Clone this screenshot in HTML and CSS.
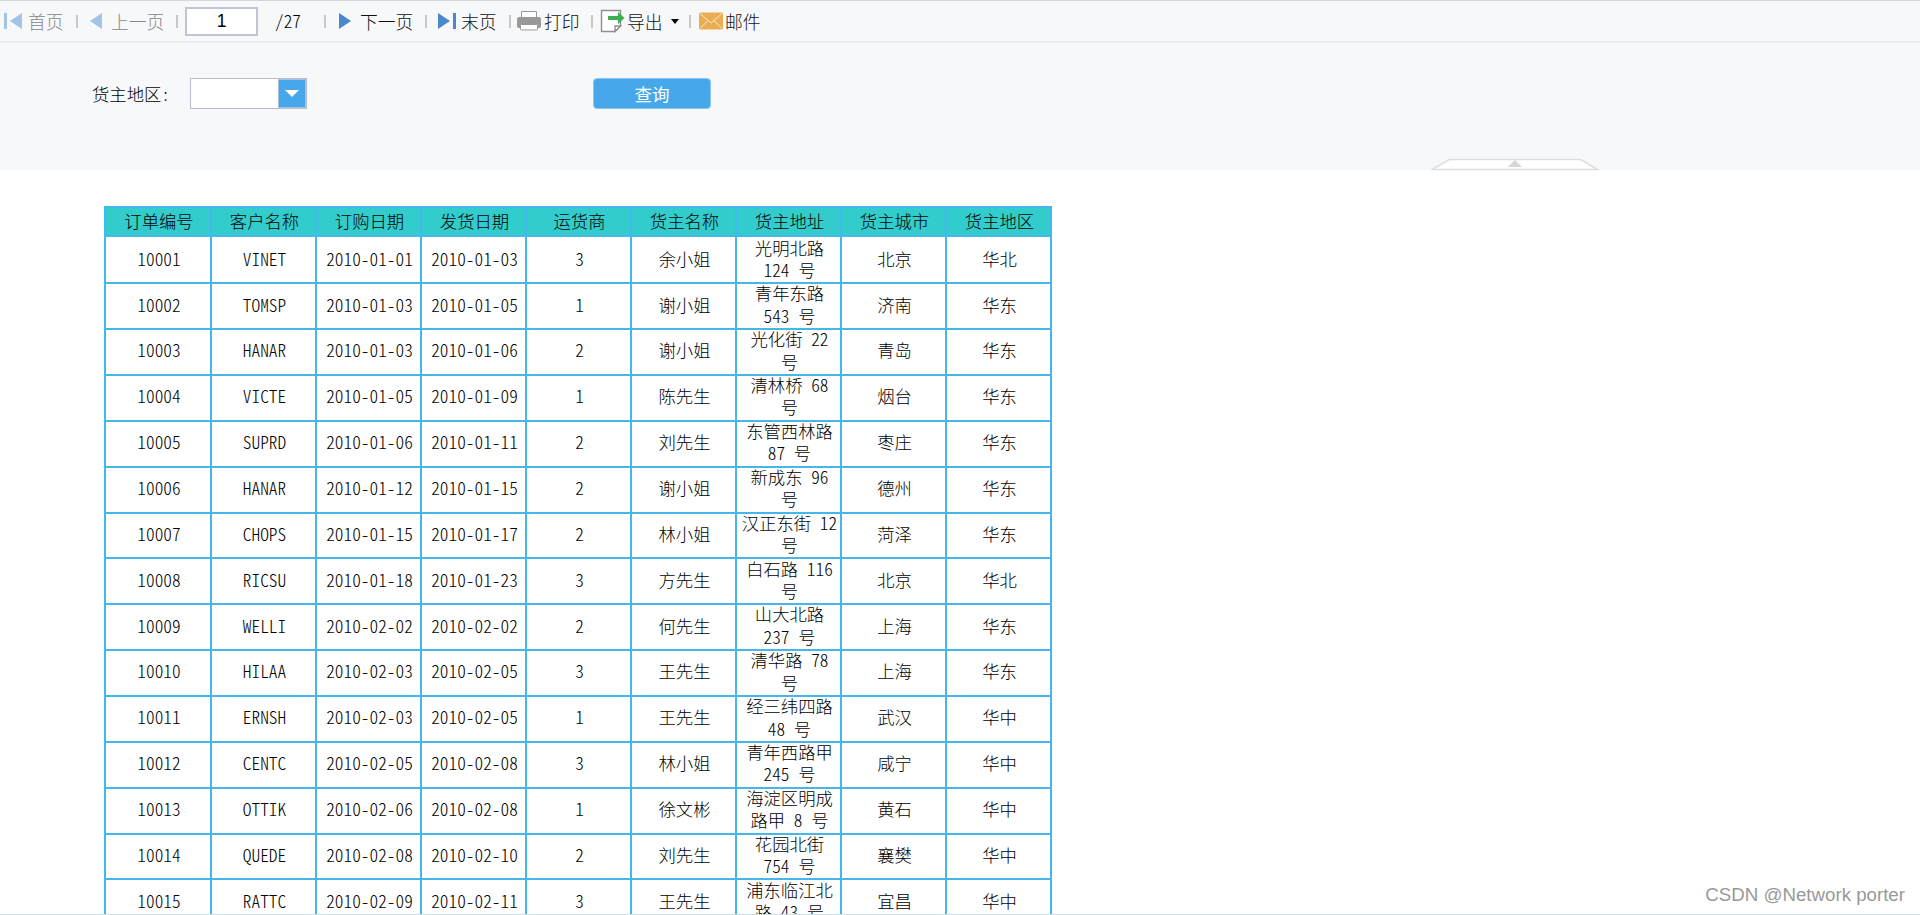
FILE: index.html
```
<!DOCTYPE html>
<html lang="zh-CN">
<head>
    <meta charset="utf-8">
    <title>订单报表</title>
    <link rel="stylesheet" href="styles.css">
</head>
<body>
<div class="toolbar">
    <div class="tool first disabled">
        <svg width="20" height="18" viewBox="0 0 20 18"><path d="M0 1h3v16H0zM18 1v16L6 9z" fill="#a3c3e5"/></svg>
        <span>首页</span>
    </div>
    <i class="sep"></i>
    <div class="tool prev disabled">
        <svg width="13" height="18" viewBox="0 0 13 18"><path d="M12 1v16L0 9z" fill="#a3c3e5"/></svg>
        <span>上一页</span>
    </div>
    <i class="sep"></i>
    <input class="page" type="text" value="1">
    <span class="total">/27</span>
    <i class="sep"></i>
    <div class="tool next">
        <svg width="13" height="18" viewBox="0 0 13 18"><path d="M0 1v16L12 9z" fill="#4a88cc"/></svg>
        <span>下一页</span>
    </div>
    <i class="sep"></i>
    <div class="tool last">
        <svg width="20" height="18" viewBox="0 0 20 18"><path d="M1 1v16L13 9zM16 1h3v16h-3z" fill="#4a88cc"/></svg>
        <span>末页</span>
    </div>
    <i class="sep"></i>
    <div class="tool print">
        <svg width="24" height="22" viewBox="0 0 24 22">
            <path d="M4.5 8V1.5h15V8" fill="#fff" stroke="#999"/>
            <rect x="0" y="7" width="24" height="11" rx="2" fill="#999"/>
            <rect x="3.5" y="14.5" width="17" height="5.5" rx="1" fill="#fff" stroke="#999"/>
        </svg>
        <span>打印</span>
    </div>
    <i class="sep"></i>
    <div class="tool export">
        <svg width="26" height="24" viewBox="0 0 26 24">
            <path d="M1.5 1.5h19V17L15 22.5H1.5z" fill="#fff" stroke="#8e8e8e" stroke-width="1.4"/>
            <path d="M20.5 17H15v5.5z" fill="#fff" stroke="#8e8e8e" stroke-width="1.4"/>
            <path d="M8 7h10V3l6.5 6L18 15v-4H8z" fill="#3fae52"/>
        </svg>
        <span>导出</span>
        <svg class="caret" width="8" height="5" viewBox="0 0 8 5"><path d="M0 0h8L4 5z" fill="#000"/></svg>
    </div>
    <i class="sep"></i>
    <div class="tool mail">
        <svg width="24" height="18" viewBox="0 0 24 18">
            <rect width="24" height="17" y=".5" rx="1.5" fill="#ebad52"/>
            <path d="M1 1.5l11 9.500 11-9.500M1 16.500l8-8M23 16.500l-8-8" fill="none" stroke="#fbe8cb"/>
        </svg>
        <span>邮件</span>
    </div>
</div>

<div class="params">
    <label for="region">货主地区:</label>
    <div class="combo">
        <input id="region" type="text">
        <div class="trigger">
            <svg width="14" height="7" viewBox="0 0 14 7"><path d="M0 0h14L7 7z" fill="#fff"/></svg>
        </div>
    </div>
    <button class="query">查询</button>
    <svg class="collapse" width="168" height="13" viewBox="0 0 168 13">
        <path d="M1.5 11.5L18 1.5h132l16.500 10z" fill="#fff" stroke="#ddd" stroke-width="1.5"/>
        <path d="M77 9l7-7 7 7z" fill="#d6d6d6"/>
    </svg>
</div>

<div class="report">
    <div class="row head">
        <div>订单编号</div><div>客户名称</div><div>订购日期</div><div>发货日期</div><div>运货商</div><div>货主名称</div><div>货主地址</div><div>货主城市</div><div>货主地区</div>
    </div>
    <div class="row"><div>10001</div><div>VINET</div><div>2010-01-01</div><div>2010-01-03</div><div>3</div><div>余小姐</div><div>光明北路<br>124 号</div><div>北京</div><div>华北</div></div>
    <div class="row"><div>10002</div><div>TOMSP</div><div>2010-01-03</div><div>2010-01-05</div><div>1</div><div>谢小姐</div><div>青年东路<br>543 号</div><div>济南</div><div>华东</div></div>
    <div class="row"><div>10003</div><div>HANAR</div><div>2010-01-03</div><div>2010-01-06</div><div>2</div><div>谢小姐</div><div>光化街 22<br>号</div><div>青岛</div><div>华东</div></div>
    <div class="row"><div>10004</div><div>VICTE</div><div>2010-01-05</div><div>2010-01-09</div><div>1</div><div>陈先生</div><div>清林桥 68<br>号</div><div>烟台</div><div>华东</div></div>
    <div class="row"><div>10005</div><div>SUPRD</div><div>2010-01-06</div><div>2010-01-11</div><div>2</div><div>刘先生</div><div>东管西林路<br>87 号</div><div>枣庄</div><div>华东</div></div>
    <div class="row"><div>10006</div><div>HANAR</div><div>2010-01-12</div><div>2010-01-15</div><div>2</div><div>谢小姐</div><div>新成东 96<br>号</div><div>德州</div><div>华东</div></div>
    <div class="row"><div>10007</div><div>CHOPS</div><div>2010-01-15</div><div>2010-01-17</div><div>2</div><div>林小姐</div><div>汉正东街 12<br>号</div><div>菏泽</div><div>华东</div></div>
    <div class="row"><div>10008</div><div>RICSU</div><div>2010-01-18</div><div>2010-01-23</div><div>3</div><div>方先生</div><div>白石路 116<br>号</div><div>北京</div><div>华北</div></div>
    <div class="row"><div>10009</div><div>WELLI</div><div>2010-02-02</div><div>2010-02-02</div><div>2</div><div>何先生</div><div>山大北路<br>237 号</div><div>上海</div><div>华东</div></div>
    <div class="row"><div>10010</div><div>HILAA</div><div>2010-02-03</div><div>2010-02-05</div><div>3</div><div>王先生</div><div>清华路 78<br>号</div><div>上海</div><div>华东</div></div>
    <div class="row"><div>10011</div><div>ERNSH</div><div>2010-02-03</div><div>2010-02-05</div><div>1</div><div>王先生</div><div>经三纬四路<br>48 号</div><div>武汉</div><div>华中</div></div>
    <div class="row"><div>10012</div><div>CENTC</div><div>2010-02-05</div><div>2010-02-08</div><div>3</div><div>林小姐</div><div>青年西路甲<br>245 号</div><div>咸宁</div><div>华中</div></div>
    <div class="row"><div>10013</div><div>OTTIK</div><div>2010-02-06</div><div>2010-02-08</div><div>1</div><div>徐文彬</div><div>海淀区明成<br>路甲 8 号</div><div>黄石</div><div>华中</div></div>
    <div class="row"><div>10014</div><div>QUEDE</div><div>2010-02-08</div><div>2010-02-10</div><div>2</div><div>刘先生</div><div>花园北街<br>754 号</div><div>襄樊</div><div>华中</div></div>
    <div class="row"><div>10015</div><div>RATTC</div><div>2010-02-09</div><div>2010-02-11</div><div>3</div><div>王先生</div><div>浦东临江北<br>路 43 号</div><div>宜昌</div><div>华中</div></div>
</div>
<div class="watermark">CSDN @Network porter</div>
</body>
</html>
```
FILE: styles.css
```
* {box-sizing:border-box;}
body {margin:0; height:915px; overflow:hidden; position:relative; background:#fff; border-bottom:1px solid #c9dfe2; font-family:"Noto Sans CJK SC",sans-serif; font-size:17.33px; font-weight:300; color:#000; display:flex; flex-direction:column;}
svg {display:block; flex:none;}

/* toolbar */
.toolbar {display:flex; align-items:center; flex:none; height:43px; padding-left:4px; background:#f7f8fa; border-top:1px solid #d5d7da; border-bottom:2px solid #ebecee; font-size:17.8px; line-height:26px; color:#111;}
.tool {display:flex; align-items:center; flex:none; white-space:nowrap;}
.disabled {color:#888;}
.sep {width:2px; height:13px; background:#c8c8cb; flex:none;}
.first {width:72px; gap:4px;}
.prev {width:98px; padding-left:12px; gap:8px;}
.page {width:73px; height:29px; margin-left:7px; padding:0; border:2px solid #c3c3d5; background:#fff; font:17.5px "Liberation Sans",sans-serif; text-align:center; flex:none;}
.total {width:66px; padding-left:17px; font-size:17.33px; font-feature-settings:"hwid"; color:#000; flex:none;}
.next {width:99px; padding-left:13px; gap:8px;}
.last {width:82px; padding-left:10px; gap:4px;}
.print {width:80px; padding-left:6px; gap:3px;}
.export {width:96px; padding-left:7px; gap:1px;}
.caret {margin-left:7px;}
.mail {padding-left:8px; gap:2px;}

/* query parameters */
.params {display:flex; align-items:flex-start; flex:none; position:relative; height:127px; padding:35px 0 0 92px; background:#f7f8fa;}
.params label {width:98px; line-height:31px; font-feature-settings:"hwid";}
.combo {display:flex; width:117px; height:31px; border:1px solid #b9bccf;}
.combo input {width:87px; border:0; background:#fff;}
.trigger {display:flex; align-items:center; justify-content:center; flex:1; background:#46a7eb; border:1px solid #a5c3da;}
.query {width:118px; height:31px; margin-left:286px; padding:0; border:1px solid #8cc6f0; border-radius:4px; background:#46a7eb; color:#fff; font:400 17.5px/27px "Noto Sans CJK SC",sans-serif;}
.collapse {position:absolute; left:1431px; bottom:-1px;}

/* report grid */
.report {width:948px; margin:36px 0 0 104px; border:solid #45b7ec; border-width:2px 0 0 2px; flex:none;}
.row {display:grid; grid-template-columns:106px repeat(8, 1fr); height:45.86px;}
.row > div {display:flex; align-items:center; justify-content:center; padding:0 0 1px 2px; border:solid #45b7ec; border-width:0 2px 2px 0; line-height:22.4px; white-space:nowrap; text-align:center; font-feature-settings:"hwid";}
.row.head {height:28.5px; background:#33cccc;}
.row.head > div {padding-bottom:0;}

.watermark {position:absolute; right:15px; bottom:8px; font:18.7px "Liberation Sans",sans-serif; color:#999;}
```
